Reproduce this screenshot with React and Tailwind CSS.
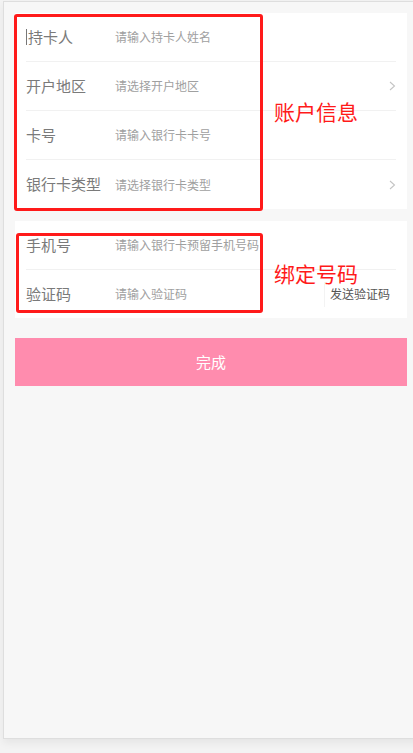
import React from "react";

const font = { fontFamily: '"Noto Sans CJK SC", "Noto Sans", sans-serif' };

function Chevron() {
  return (
    <svg width="7" height="10" viewBox="0 0 7 10" className="ml-auto">
      <path d="M1 1 L5.5 5 L1 9" fill="none" stroke="#c4c4c4" strokeWidth="1.1" />
    </svg>
  );
}

function Row({ label, placeholder, chevron, last, caret, right }) {
  return (
    <div
      className={`mx-[11px] h-[49px] flex items-center ${last ? "" : "border-b border-[#f1f1f1]"}`}
    >
      <div className="w-[89px] flex items-center text-[15px] text-[#7a7a7a]">
        {caret && <span className="w-[1px] h-[16px] bg-[#777] mr-[1px]" />}
        {label}
      </div>
      <div className="text-[12px] text-[#a0a0a0]">{placeholder}</div>
      {chevron && <Chevron />}
      {right}
    </div>
  );
}

export default function App() {
  return (
    <div className="relative h-[753px] w-[413px] overflow-hidden bg-[#f3f3f3]" style={font}>
      <div className="ml-[3px] mt-[1px] w-[430px] h-[738px] border border-[#dedede] bg-[#f7f7f7] shadow-[0_4px_8px_rgba(0,0,0,0.06)]">
        <div className="pl-[11px] pt-[11px] w-[403px]">
          <div className="bg-white w-[392px]">
            <Row label="持卡人" placeholder="请输入持卡人姓名" caret />
            <Row label="开户地区" placeholder="请选择开户地区" chevron />
            <Row label="卡号" placeholder="请输入银行卡卡号" />
            <Row label="银行卡类型" placeholder="请选择银行卡类型" chevron last />
          </div>
          <div className="bg-white w-[392px] mt-[12px]">
            <Row label="手机号" placeholder="请输入银行卡预留手机号码" />
            <div className="mx-[11px] h-[48px] flex items-center">
              <div className="w-[89px] text-[15px] text-[#7a7a7a]">验证码</div>
              <div className="text-[12px] text-[#a0a0a0]">请输入验证码</div>
              <div className="ml-auto mr-[6px] flex items-center">
                <span className="w-[1px] h-[25px] bg-[#f3f3f3] mr-[5px]" />
                <span className="text-[12px] text-[#555]">发送验证码</span>
              </div>
            </div>
          </div>
          <div className="mt-[20px] w-[392px] h-[48px] bg-[#ff8cae] flex items-center justify-center text-white text-[15px]">
            完成
          </div>
        </div>
      </div>

      <div className="absolute left-[14px] top-[14px] w-[249px] h-[197px] border-[3px] border-[#ff1a1a] rounded-[3px]" />
      <div className="absolute left-[16px] top-[233px] w-[247px] h-[80px] border-[3px] border-[#ff1a1a] rounded-[3px]" />
      <div className="absolute left-[274px] top-[98px] text-[21px] leading-[26px] text-[#ff1a1a]">账户信息</div>
      <div className="absolute left-[274px] top-[260px] text-[21px] leading-[26px] text-[#ff1a1a]">绑定号码</div>
    </div>
  );
}
